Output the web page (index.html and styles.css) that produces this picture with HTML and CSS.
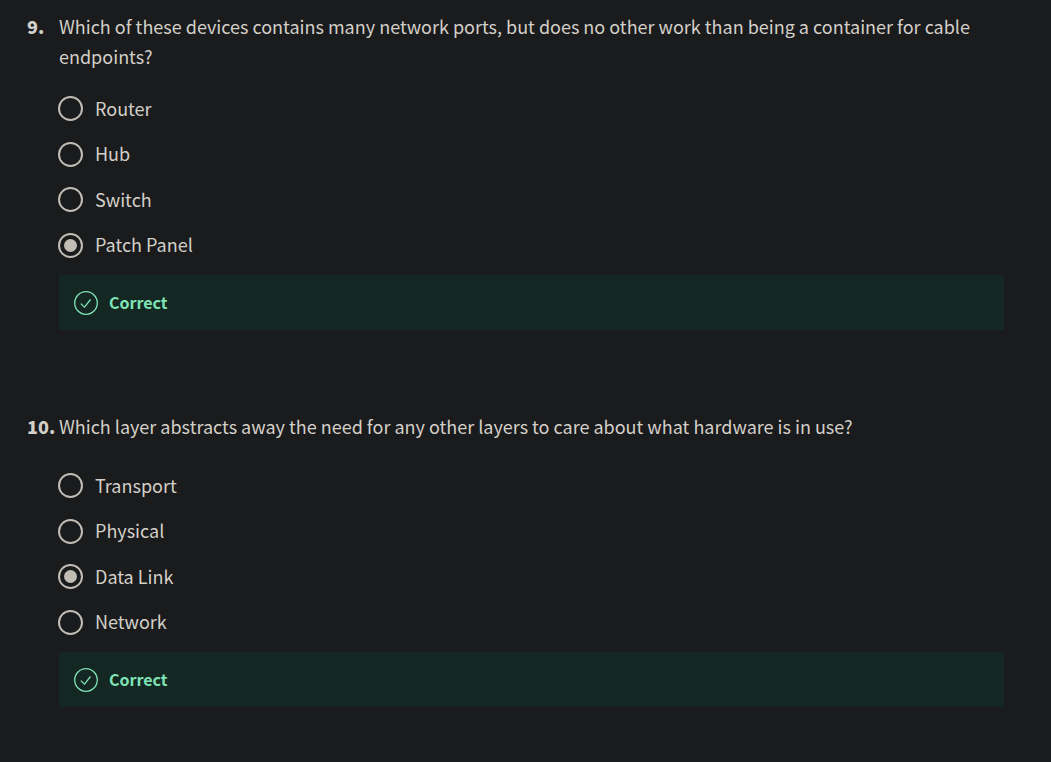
FILE: index.html
```html
<!DOCTYPE html>
<html lang="en">
<head>
<meta charset="utf-8">
<title>Quiz results</title>
<link rel="stylesheet" href="styles.css">
</head>
<body>
<main class="quiz">
  <fieldset class="question">
    <legend class="prompt"><span class="number">9.</span><span class="text">Which of these devices contains many network ports, but does no other work than being a container for cable endpoints?</span></legend>
    <div class="options">
      <label class="option"><input class="radio" type="radio" name="q9"><span class="label">Router</span></label>
      <label class="option"><input class="radio" type="radio" name="q9"><span class="label">Hub</span></label>
      <label class="option"><input class="radio" type="radio" name="q9"><span class="label">Switch</span></label>
      <label class="option"><input class="radio" type="radio" name="q9" checked><span class="label">Patch Panel</span></label>
    </div>
    <div class="feedback">
      <svg class="check" viewBox="0 0 24 24" aria-hidden="true"><circle cx="12" cy="12" r="11.3"/><path d="M6.8 12.6l3.7 3.5 6-7.6"/></svg>
      <span class="label">Correct</span>
    </div>
  </fieldset>
  <fieldset class="question">
    <legend class="prompt"><span class="number">10.</span><span class="text">Which layer abstracts away the need for any other layers to care about what hardware is in use?</span></legend>
    <div class="options spaced">
      <label class="option"><input class="radio" type="radio" name="q10"><span class="label">Transport</span></label>
      <label class="option"><input class="radio" type="radio" name="q10"><span class="label">Physical</span></label>
      <label class="option"><input class="radio" type="radio" name="q10" checked><span class="label">Data Link</span></label>
      <label class="option"><input class="radio" type="radio" name="q10"><span class="label">Network</span></label>
    </div>
    <div class="feedback">
      <svg class="check" viewBox="0 0 24 24" aria-hidden="true"><circle cx="12" cy="12" r="11.3"/><path d="M6.8 12.6l3.7 3.5 6-7.6"/></svg>
      <span class="label">Correct</span>
    </div>
  </fieldset>
</main>
</body>
</html>
```

FILE: styles.css
```css
* { box-sizing: border-box; }
body {
  margin: 0;
  background: #1a1b1c;
  color: #d3cfc9;
  font-family: "Noto Sans CJK SC", "Noto Sans", sans-serif;
  font-size: 18px;
  line-height: 30px;
}
.quiz {
  display: flex;
  flex-direction: column;
  gap: 81px;
  padding: 11px 47px 48px 27px;
}
.question {
  min-width: 0;
  margin: 0;
  padding: 0;
  border: 0;
}
.prompt {
  display: flex;
  width: 100%;
  padding: 0;
}
.number {
  flex: 0 0 32px;
  font-weight: 900;
}
.text { flex: 1; }
.label { padding-bottom: 2px; }
.options {
  display: grid;
  grid-auto-rows: 1fr;
  min-height: 204px;
  padding: 15px 0 7px 31px;
}
.options.spaced {
  min-height: 211px;
  padding-top: 22px;
}
.option {
  display: flex;
  align-items: center;
  gap: 12px;
}
.radio {
  appearance: none;
  display: grid;
  place-items: center;
  width: 25px;
  height: 25px;
  margin: 0;
  border: 2px solid #c1bcb4;
  border-radius: 50%;
}
.radio:checked::before {
  content: "";
  width: 13px;
  height: 13px;
  border-radius: 50%;
  background: #c1bcb4;
}
.feedback {
  display: flex;
  align-items: center;
  gap: 11px;
  min-height: 55px;
  margin-left: 32px;
  padding: 11px 15px;
  background: #152722;
  color: #7fe3b6;
  font-size: 16px;
  font-weight: 700;
}
.check {
  width: 24px;
  height: 24px;
  fill: none;
  stroke: currentColor;
  stroke-width: 1.3;
}
```
